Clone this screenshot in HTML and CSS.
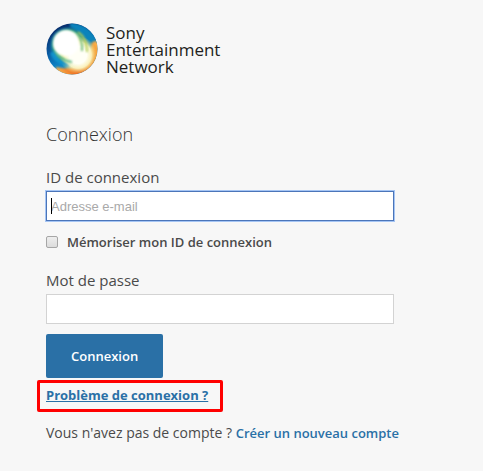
FILE: index.html
```html
<!DOCTYPE html>
<html lang="fr">
<head>
  <meta charset="UTF-8">
  <title>Connexion</title>
  <link rel="stylesheet" href="styles.css">
</head>
<body>
  <header class="brand">
    <svg class="brand-logo" viewBox="0 0 52 52" aria-hidden="true">
      <defs>
        <linearGradient id="ring" gradientUnits="userSpaceOnUse" x1="10" y1="8" x2="24" y2="46">
          <stop offset="0" stop-color="#08306f"/>
          <stop offset="0.5" stop-color="#0a5ea6"/>
          <stop offset="1" stop-color="#1199d6"/>
        </linearGradient>
        <radialGradient id="halo" gradientUnits="userSpaceOnUse" cx="22" cy="22" r="19">
          <stop offset="0.65" stop-color="#b4e0a0"/>
          <stop offset="0.8" stop-color="#3aa88a" stop-opacity="0.85"/>
          <stop offset="1" stop-color="#0d87b0" stop-opacity="0"/>
        </radialGradient>
        <radialGradient id="gold" gradientUnits="userSpaceOnUse" cx="32" cy="32" r="19">
          <stop offset="0.45" stop-color="#fffff6"/>
          <stop offset="0.7" stop-color="#fbf7c4" stop-opacity="0.95"/>
          <stop offset="1" stop-color="#f0dc6a" stop-opacity="0"/>
        </radialGradient>
        <linearGradient id="flame" gradientUnits="userSpaceOnUse" x1="10" y1="46" x2="51" y2="16">
          <stop offset="0" stop-color="#f7b04a"/>
          <stop offset="0.3" stop-color="#ec651c"/>
          <stop offset="0.7" stop-color="#f28a2a"/>
          <stop offset="1" stop-color="#f9b851"/>
        </linearGradient>
        <clipPath id="disc"><circle cx="26" cy="26" r="25.5"/></clipPath>
        <filter id="soft" x="-20%" y="-20%" width="140%" height="140%" color-interpolation-filters="sRGB"><feGaussianBlur stdDeviation="0.8"/></filter>
      </defs>
      <g clip-path="url(#disc)">
        <rect width="52" height="52" fill="url(#ring)"/>
        <path d="M24 0Q43 0 52 19L42 26Q37 10 24 4Z" fill="#0b83bb" filter="url(#soft)"/>
        <path d="M10 44Q22 47 32 42Q42 37 46 19L54 17V54H10Z" fill="url(#flame)" filter="url(#soft)"/>
        <circle cx="22" cy="22" r="19" fill="url(#halo)"/>
        <circle cx="32" cy="32" r="19" fill="url(#gold)" clip-path="url(#disc)"/>
        <path d="M32 9Q41 15 41 29" fill="none" stroke="#b5cf58" stroke-width="2" filter="url(#soft)"/>
        <path d="M30 11Q37 17 36 28" fill="none" stroke="#78be7a" stroke-width="2" filter="url(#soft)"/>
        <path d="M4 30Q8 42 24 43Q13 38 9 28Z" fill="#1193cc" filter="url(#soft)"/>
        <path d="M9 28Q13 37 26 39" fill="none" stroke="#5fb98a" stroke-width="2" filter="url(#soft)"/>
        <circle cx="20" cy="20" r="13" fill="#fff" filter="url(#soft)"/>
      </g>
    </svg>
    <div class="brand-name">Sony<br>Entertainment<br>Network</div>
  </header>

  <main class="login">
    <h1>Connexion</h1>
    <form>
      <label class="field-label" for="email">ID de connexion</label>
      <div class="field active">
        <input type="email" id="email" placeholder="Adresse e-mail">
      </div>

      <div class="remember">
        <input type="checkbox" id="remember">
        <label for="remember">Mémoriser mon ID de connexion</label>
      </div>

      <label class="field-label" for="password">Mot de passe</label>
      <div class="field">
        <input type="password" id="password">
      </div>

      <button type="submit">Connexion</button>
    </form>

    <p class="help"><a href="#">Problème de connexion ?</a></p>
    <p class="signup">Vous n'avez pas de compte ? <a href="#">Créer un nouveau compte</a></p>
  </main>
</body>
</html>
```

FILE: styles.css
```css
* {
  box-sizing: border-box;
}

body {
  margin: 0;
  padding: 23px 46px;
  font-family: "Open Sans", "Noto Sans", sans-serif;
  font-size: 13px;
  line-height: 20px;
  color: #4a4a4a;
  background-color: #f7f7f7;
}

.brand {
  display: flex;
  align-items: center;
  gap: 8px;
  margin-bottom: 47px;
}

.brand-logo {
  width: 52px;
  height: 52px;
}

.brand-name {
  font-size: 17px;
  line-height: 17px;
  color: #231f20;
}

.login {
  max-width: 360px;
}

h1 {
  margin: 0 0 21px;
  font-size: 18px;
  font-weight: 300;
  line-height: 24px;
  color: #333;
}

.field-label {
  display: block;
  margin-bottom: 4px;
  font-size: 15px;
}

.field {
  position: relative;
  max-width: 348px;
}

.field input {
  display: block;
  width: 100%;
  height: 30px;
  padding: 0 4px;
  border: 1px solid #d3d3d3;
  border-radius: 0;
  outline: none;
  font-family: "Liberation Sans", Arial, sans-serif;
  font-size: 13px;
  background-color: #fff;
}

.field input::placeholder {
  color: #a9a9a9;
}

.active input {
  border-color: #4b75b9;
  box-shadow: 0 0 0 1px #a5c5f4;
}

/* text cursor of the active field */
.active::after {
  content: "";
  position: absolute;
  top: 7px;
  left: 5px;
  width: 1px;
  height: 16px;
  background-color: #000;
}

.remember {
  display: flex;
  align-items: center;
  gap: 9px;
  margin: 11px 0 18px;
  font-weight: 600;
}

.remember input {
  appearance: none;
  width: 12px;
  height: 12px;
  margin: 0;
  border: 1px solid #a6a6a6;
  border-radius: 2px;
  background: linear-gradient(#eee, #dcdcdc);
}

.remember input:checked {
  background: #2a70a6;
}

button {
  display: block;
  margin-top: 10px;
  padding: 12px 25px;
  border: none;
  border-radius: 2px;
  font-family: inherit;
  font-size: 13px;
  font-weight: 600;
  line-height: 20px;
  color: #fff;
  background-color: #2a70a6;
  cursor: pointer;
}

a {
  font-size: 13px;
  font-weight: 600;
  color: #2a70a6;
  text-decoration: none;
}

.help {
  margin: 7px 0 18px;
}

.help a {
  position: relative;
  font-weight: 700;
  text-decoration: underline;
}

/* red frame around the help link */
.help a::before {
  content: "";
  position: absolute;
  inset: -6px -15px -8px -9px;
  border: 3px solid #f00;
  border-radius: 2px;
}

.signup {
  margin: 0;
  font-size: 14px;
}
```
